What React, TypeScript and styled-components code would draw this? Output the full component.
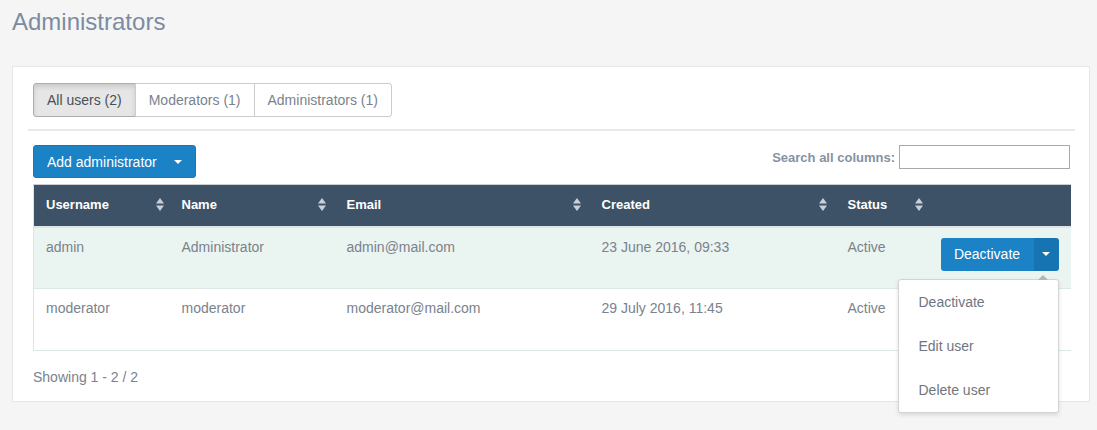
import styled, { createGlobalStyle } from "styled-components";

const GlobalStyle = createGlobalStyle`
  html, body {
    margin: 0;
    padding: 0;
    background: #f5f5f5;
    font-family: "Liberation Sans", Arial, sans-serif;
    font-size: 14px;
    color: #7a828d;
  }
  * { box-sizing: border-box; }
`;

const Page = styled.div`
  padding: 0 7px 28px 12px;
`;

const Title = styled.h1`
  margin: 0;
  padding-top: 7px;
  height: 66px;
  font-size: 24px;
  font-weight: 400;
  line-height: 30px;
  color: #7b8ca2;
`;

const Panel = styled.div`
  background: #fff;
  border: 1px solid #e6e6e6;
  padding: 16px 19px 16px 20px;
`;

const TabGroup = styled.div`
  display: inline-flex;
`;

const Tab = styled.button<{ $active?: boolean }>`
  height: 34px;
  padding: 0 13px;
  font-family: inherit;
  font-size: 14px;
  border: 1px solid ${(p) => (p.$active ? "#adadad" : "#cccccc")};
  background: ${(p) => (p.$active ? "#e6e6e6" : "#fff")};
  color: ${(p) => (p.$active ? "#4a4f55" : "#7a828d")};
  box-shadow: ${(p) => (p.$active ? "inset 0 3px 5px rgba(0,0,0,0.125)" : "none")};
  margin-left: -1px;
  &:first-child {
    margin-left: 0;
    border-radius: 3px 0 0 3px;
  }
  &:last-child {
    border-radius: 0 3px 3px 0;
  }
`;

const Divider = styled.div`
  height: 2px;
  background: #e7eaec;
  margin: 12px -5px 14px;
`;

const Toolbar = styled.div`
  display: flex;
  justify-content: space-between;
  align-items: flex-start;
  margin-bottom: 6px;
`;

const PrimaryButton = styled.button`
  display: flex;
  align-items: center;
  height: 33px;
  padding: 0 13px;
  background: #1b82c5;
  border: 1px solid #1877b5;
  border-radius: 3px;
  color: #fff;
  font-family: inherit;
  font-size: 14px;
  gap: 17px;
`;

const Caret = styled.span`
  display: inline-block;
  width: 0;
  height: 0;
  border-left: 4px solid transparent;
  border-right: 4px solid transparent;
  border-top: 4px solid #fff;
`;

const SearchBox = styled.label`
  display: flex;
  align-items: center;
  gap: 4px;
  font-size: 13px;
  font-weight: 700;
  color: #8592a2;
  input {
    width: 171px;
    height: 24px;
    border: 1px solid #aaa;
    font-family: inherit;
  }
`;

const Table = styled.table`
  width: 100%;
  border-collapse: collapse;
  table-layout: fixed;
  border-left: 1px solid #e3e3e3;
  border-bottom: 1px solid #e3e3e3;
`;

const HeadCell = styled.th`
  height: 42px;
  padding: 0 12px 1px;
  background: #3e5267;
  border-top: 1px solid #c9cfd5;
  border-bottom: 2px solid #dfe4e7;
  color: #fff;
  font-size: 13px;
  font-weight: 700;
  text-align: left;
  position: relative;
`;

const SortIcon = styled.svg<{ $right: number }>`
  position: absolute;
  top: 13px;
  right: ${(p) => p.$right}px;
`;

const Row = styled.tr<{ $highlight?: boolean }>`
  background: ${(p) => (p.$highlight ? "#eaf4f0" : "#fff")};
  border-bottom: 1px solid #dbe9e2;
`;

const Cell = styled.td`
  height: 62px;
  padding: 11px 12px 0;
  vertical-align: top;
  color: #7a828d;
  font-size: 14px;
`;

const ActionCell = styled.td`
  padding: 10px 12px 0;
  vertical-align: top;
  position: relative;
`;

const SplitButton = styled.div`
  display: flex;
  height: 33px;
  border-radius: 3px;
  overflow: hidden;
`;

const SplitMain = styled.button`
  flex: 1;
  background: #1b82c5;
  border: none;
  color: #fff;
  font-family: inherit;
  font-size: 14px;
  padding: 0;
`;

const SplitToggle = styled.button`
  width: 25px;
  background: #1774b3;
  border: none;
  display: flex;
  align-items: center;
  justify-content: center;
  padding: 0;
`;

const Menu = styled.ul`
  position: absolute;
  top: 51px;
  right: 12px;
  width: 161px;
  margin: 0;
  padding: 0;
  list-style: none;
  background: #fff;
  border: 1px solid #d4d4d4;
  border-radius: 3px;
  box-shadow: 0 2px 4px rgba(0, 0, 0, 0.12);
  z-index: 2;
  &::before {
    content: "";
    position: absolute;
    top: -5px;
    right: 10px;
    border-left: 5px solid transparent;
    border-right: 5px solid transparent;
    border-bottom: 5px solid #b5b5b5;
  }
`;

const MenuItem = styled.li`
  height: 44px;
  line-height: 44px;
  padding: 0 20px;
  color: #6f7680;
  font-size: 14px;
`;

const Footer = styled.div`
  padding-top: 18px;
  height: 34px;
  color: #7a828d;
  font-size: 14px;
`;

const columns = [
  { label: "Username", width: 136, sort: 6 },
  { label: "Name", width: 165, sort: 9 },
  { label: "Email", width: 255, sort: 9 },
  { label: "Created", width: 246, sort: 9 },
  { label: "Status", width: 93, sort: 6 },
  { label: "", width: 142, sort: 0 },
];

const users = [
  {
    username: "admin",
    name: "Administrator",
    email: "admin@mail.com",
    created: "23 June 2016, 09:33",
    status: "Active",
  },
  {
    username: "moderator",
    name: "moderator",
    email: "moderator@mail.com",
    created: "29 July 2016, 11:45",
    status: "Active",
  },
];

const Sort = ({ right }: { right: number }) => (
  <SortIcon $right={right} width="8" height="13" viewBox="0 0 8 13">
    <path d="M4 0 L8 5.5 H0 Z" fill="#c9cfd6" />
    <path d="M4 13 L8 7.5 H0 Z" fill="#c9cfd6" />
  </SortIcon>
);

export default function App() {
  return (
    <Page>
      <GlobalStyle />
      <Title>Administrators</Title>
      <Panel>
        <TabGroup>
          <Tab $active>All users (2)</Tab>
          <Tab>Moderators (1)</Tab>
          <Tab>Administrators (1)</Tab>
        </TabGroup>
        <Divider />
        <Toolbar>
          <PrimaryButton>
            Add administrator <Caret />
          </PrimaryButton>
          <SearchBox>
            Search all columns:
            <input type="text" />
          </SearchBox>
        </Toolbar>
        <Table>
          <colgroup>
            {columns.map((c, i) => (
              <col key={i} style={{ width: c.width }} />
            ))}
          </colgroup>
          <thead>
            <tr>
              {columns.map((c, i) => (
                <HeadCell key={i}>
                  {c.label}
                  {c.sort > 0 && <Sort right={c.sort} />}
                </HeadCell>
              ))}
            </tr>
          </thead>
          <tbody>
            {users.map((u, i) => (
              <Row key={u.username} $highlight={i === 0}>
                <Cell>{u.username}</Cell>
                <Cell>{u.name}</Cell>
                <Cell>{u.email}</Cell>
                <Cell>{u.created}</Cell>
                <Cell>{u.status}</Cell>
                {i === 0 ? (
                  <ActionCell>
                    <SplitButton>
                      <SplitMain>Deactivate</SplitMain>
                      <SplitToggle>
                        <Caret />
                      </SplitToggle>
                    </SplitButton>
                    <Menu>
                      <MenuItem>Deactivate</MenuItem>
                      <MenuItem>Edit user</MenuItem>
                      <MenuItem>Delete user</MenuItem>
                    </Menu>
                  </ActionCell>
                ) : (
                  <Cell />
                )}
              </Row>
            ))}
          </tbody>
        </Table>
        <Footer>Showing 1 - 2 / 2</Footer>
      </Panel>
    </Page>
  );
}
